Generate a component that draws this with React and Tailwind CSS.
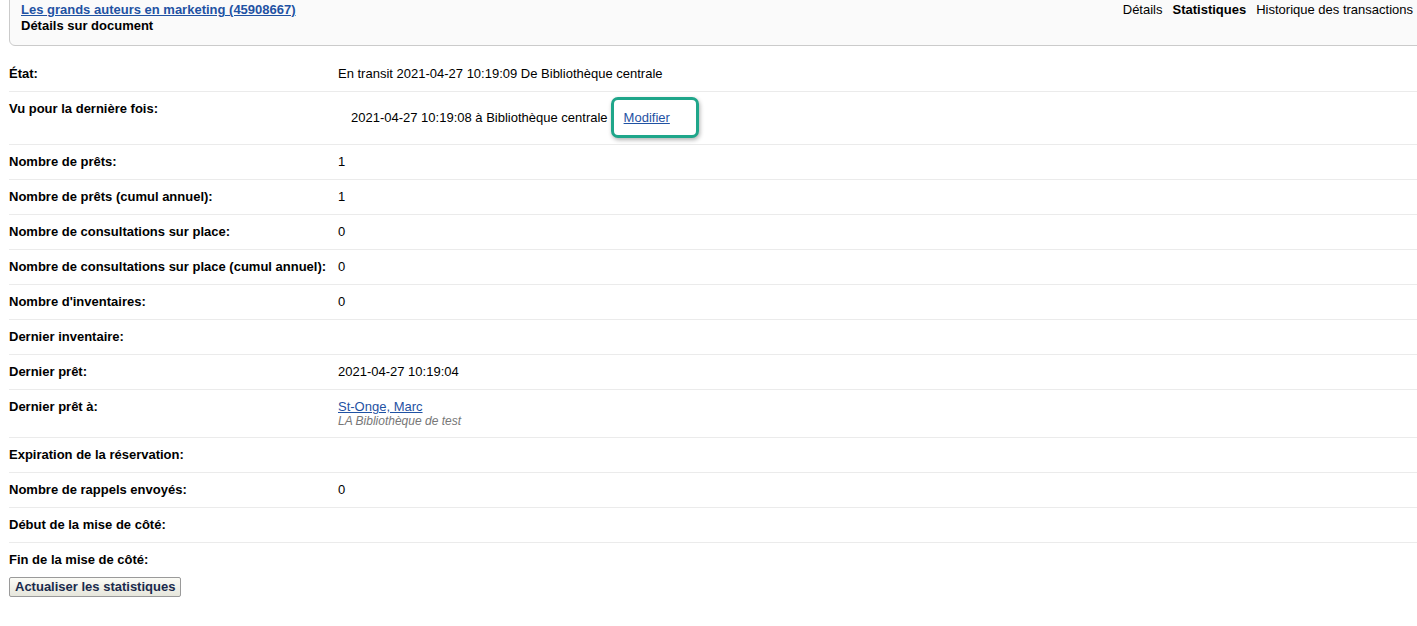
import React from 'react';

const rows = [
  { label: 'État:', value: 'En transit 2021-04-27 10:19:09 De Bibliothèque centrale' },
  { label: 'Vu pour la dernière fois:', special: 'seen' },
  { label: 'Nombre de prêts:', value: '1' },
  { label: 'Nombre de prêts (cumul annuel):', value: '1' },
  { label: 'Nombre de consultations sur place:', value: '0' },
  { label: 'Nombre de consultations sur place (cumul annuel):', value: '0' },
  { label: "Nombre d'inventaires:", value: '0' },
  { label: 'Dernier inventaire:', value: '' },
  { label: 'Dernier prêt:', value: '2021-04-27 10:19:04' },
  { label: 'Dernier prêt à:', special: 'patron' },
  { label: 'Expiration de la réservation:', value: '' },
  { label: 'Nombre de rappels envoyés:', value: '0' },
  { label: 'Début de la mise de côté:', value: '' },
  { label: 'Fin de la mise de côté:', value: '' },
];

function Value({ row }) {
  if (row.special === 'seen') {
    return (
      <div className="flex items-center pt-[5px] pb-[6px] pl-[13px]">
        <span className="mr-[3px]">2021-04-27 10:19:08 à Bibliothèque centrale</span>
        <span className="inline-flex items-center h-[41px] pl-[10px] pr-[26px] border-[3px] border-[#1fa68a] rounded-[7px] bg-white shadow-[1px_2px_4px_rgba(0,0,0,0.3)]">
          <a href="#" className="text-[#1f52a3] underline">Modifier</a>
        </span>
      </div>
    );
  }
  if (row.special === 'patron') {
    return (
      <div className="py-[9px]">
        <a href="#" className="block leading-[16px] text-[#1f52a3] underline">St-Onge, Marc</a>
        <div className="text-[12px] leading-[13px] italic text-[#777]">LA Bibliothèque de test</div>
      </div>
    );
  }
  return <div className="py-[9px] leading-[16px]">{row.value}</div>;
}

export default function App() {
  return (
    <div className="min-h-screen bg-white text-[13px] text-black overflow-hidden" style={{ fontFamily: '"Liberation Sans", Arial, sans-serif' }}>
      <div className="ml-[9px] -mr-[4px] -mt-[4px] border border-[#cbcbcb] rounded-bl-[6px] bg-[#fafafa] pl-[11px] pt-[5px] pb-[11px] flex justify-between leading-[16px]">
        <div>
          <a href="#" className="font-bold text-[#1f52a3] underline">Les grands auteurs en marketing (45908667)</a>
          <div className="font-bold">Détails sur document</div>
        </div>
        <div className="flex gap-[10px] pr-[7px] h-[16px]">
          <span>Détails</span>
          <span className="font-bold">Statistiques</span>
          <span>Historique des transactions</span>
        </div>
      </div>

      <div className="mt-[11px] ml-[9px]">
        {rows.map((row, i) => (
          <div key={i} className={`flex items-start ${i > 0 ? 'border-t border-[#ebebeb]' : ''}`}>
            <div className="w-[329px] shrink-0 py-[9px] leading-[16px] font-bold">{row.label}</div>
            <Value row={row} />
          </div>
        ))}
        <button className="h-[20px] px-[5px] border border-[#9a9a9a] rounded-[2px] bg-gradient-to-b from-[#fbfbf6] to-[#e6e6dc] font-bold text-[#1a2a4c] text-[13px] leading-[16px]">
          Actualiser les statistiques
        </button>
      </div>
    </div>
  );
}
